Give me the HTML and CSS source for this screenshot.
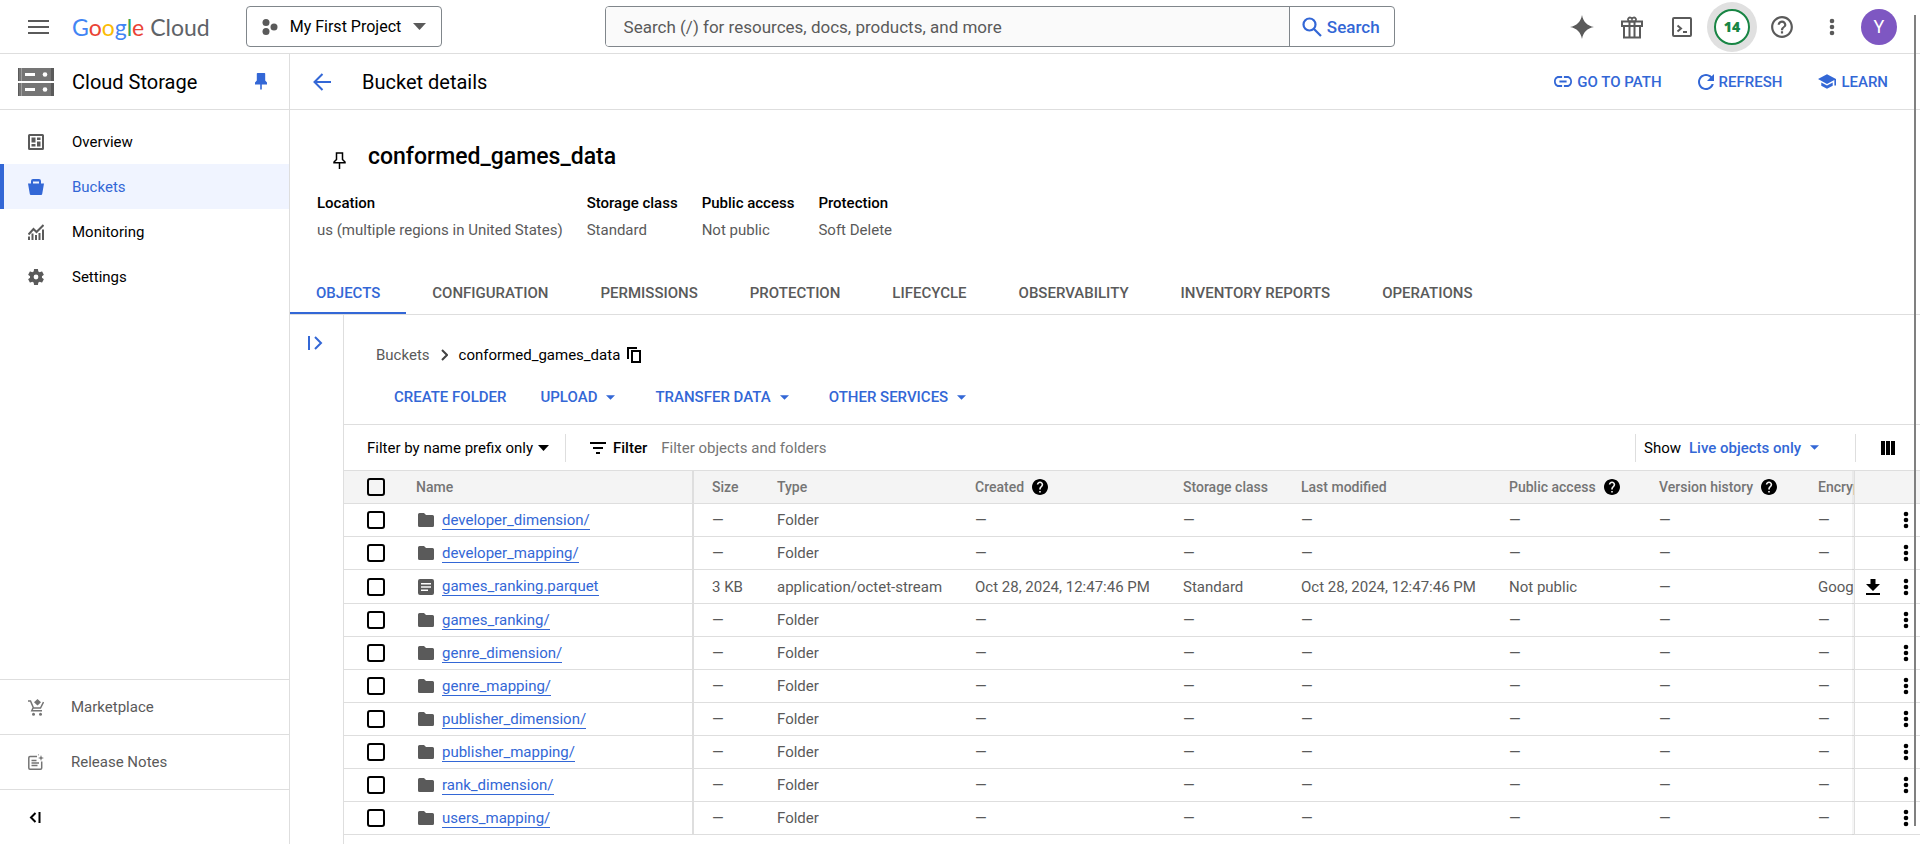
FILE: index.html
```html
<!DOCTYPE html>
<html lang="en">
<head>
<meta charset="utf-8">
<meta name="viewport" content="width=device-width, initial-scale=1">
<title>conformed_games_data – Bucket details – Cloud Storage</title>
<link rel="stylesheet" href="styles.css">
</head>
<body>
<svg class="sprite" aria-hidden="true">
  <symbol id="caret" viewBox="0 0 10 5"><path d="M0 0h10L5 5z"/></symbol>
  <symbol id="folder" viewBox="0 0 16 14"><path d="M1.500 0H6l2 2h6.500A1.500 1.500 0 0 1 16 3.500v9a1.500 1.500 0 0 1-1.500 1.500h-13A1.500 1.500 0 0 1 0 12.500v-11A1.500 1.500 0 0 1 1.500 0z"/></symbol>
  <symbol id="file" viewBox="0 0 16 16"><path fill-rule="evenodd" d="M2 0h12a2 2 0 0 1 2 2v12a2 2 0 0 1-2 2H2a2 2 0 0 1-2-2V2a2 2 0 0 1 2-2zm1 4v1.500h10V4zm0 3.200v1.500h10V7.200zm0 3.300V12h7v-1.500z"/></symbol>
  <symbol id="dots" viewBox="0 0 6 18"><circle cx="3" cy="3" r="2.300"/><circle cx="3" cy="9" r="2.300"/><circle cx="3" cy="15" r="2.300"/></symbol>
  <symbol id="help" viewBox="2 2 20 20"><path d="M12 2C6.480 2 2 6.480 2 12s4.480 10 10 10 10-4.480 10-10S17.520 2 12 2zm1 17h-2v-2h2v2zm2.070-7.750l-.9.920C13.450 12.900 13 13.500 13 15h-2v-.5c0-1.100.45-2.100 1.170-2.830l1.240-1.260c.37-.36.59-.86.59-1.410 0-1.100-.9-2-2-2s-2 .9-2 2H8c0-2.210 1.790-4 4-4s4 1.790 4 4c0 .88-.36 1.680-.93 2.250z"/></symbol>
</svg>

<div class="app">
  <header class="topbar">
    <button class="icon-btn menu-btn" aria-label="Main menu">
      <svg width="21" height="14" viewBox="0 0 21 14"><path d="M0 0h21v2H0zM0 6h21v2H0zM0 12h21v2H0z"/></svg>
    </button>
    <a class="logo" href="#" aria-label="Google Cloud"><span class="g-blue">G</span><span class="g-red">o</span><span class="g-yellow">o</span><span class="g-blue">g</span><span class="g-green">l</span><span class="g-red">e</span> <span class="logo-cloud">Cloud</span></a>
    <button class="project">
      <svg width="16" height="16" viewBox="0 0 16 16"><circle cx="4" cy="3.500" r="3.500"/><circle cx="4" cy="12.500" r="3.500"/><circle cx="12" cy="8" r="3.500"/></svg>
      <span>My First Project</span>
      <svg width="13" height="7" viewBox="0 0 10 5" preserveAspectRatio="none"><path d="M0 0h10L5 5z"/></svg>
    </button>
    <form class="search">
      <input class="search-input" type="search" aria-label="Search" placeholder="Search (/) for resources, docs, products, and more">
      <button class="search-btn" type="button">
        <svg width="20" height="20" viewBox="0 0 20 20" fill="none" stroke="currentColor" stroke-width="2.200"><circle cx="7.500" cy="7.500" r="6"/><path d="M12 12l7 7"/></svg>
        Search
      </button>
    </form>
    <nav class="tools" aria-label="Tools">
      <button class="icon-btn" aria-label="Gemini"><svg width="24" height="24" viewBox="0 0 24 24"><path d="M12 0c1.200 6.800 5.200 10.800 12 12-6.800 1.200-10.800 5.200-12 12-1.200-6.800-5.200-10.800-12-12C6.800 10.800 10.800 6.800 12 0z"/></svg></button>
      <button class="icon-btn" aria-label="Free trial"><svg width="24" height="24" viewBox="0 0 24 24" fill="none" stroke="currentColor" stroke-width="2"><path d="M2 6.500h20v4.500H2zM4 11v11.500h16V11M9.500 6.500v16M14.500 6.500v16"/><path d="M12 6.500H9.200a2.100 2.100 0 1 1 2.800-2.700 2.100 2.100 0 1 1 2.800 2.700z" stroke-width="1.800"/></svg></button>
      <button class="icon-btn" aria-label="Cloud Shell"><svg width="20" height="20" viewBox="0 0 20 20" fill="none" stroke="currentColor" stroke-width="2"><rect x="1" y="1" width="18" height="18" rx="1"/><path d="M5.500 8.500l3.500 3-3.500 3M11 15h4"/></svg></button>
      <button class="icon-btn badge-btn" aria-label="14 notifications"><span class="badge">14</span></button>
      <button class="icon-btn" aria-label="Help"><svg width="24" height="24" viewBox="1 1 22 22"><path d="M11 18h2v-2h-2v2zm1-16C6.480 2 2 6.480 2 12s4.480 10 10 10 10-4.480 10-10S17.520 2 12 2zm0 18c-4.410 0-8-3.590-8-8s3.590-8 8-8 8 3.590 8 8-3.590 8-8 8zm0-14c-2.210 0-4 1.790-4 4h2c0-1.100.9-2 2-2s2 .9 2 2c0 2-3 1.750-3 5h2c0-2.250 3-2.500 3-5 0-2.210-1.790-4-4-4z"/></svg></button>
      <button class="icon-btn" aria-label="More"><svg width="6" height="18"><use href="#dots"/></svg></button>
      <button class="avatar" aria-label="Account">Y</button>
    </nav>
  </header>

  <div class="body">
    <aside class="sidebar">
      <div class="product">
        <svg class="product-icon" width="36" height="28" viewBox="0 0 36 28"><path fill="#757575" d="M0 0h36v13H0zM0 15h36v13H0z"/><path fill="#9e9e9e" d="M3 0h1v13H3zM3 15h1v13H3z"/><path fill="#5a5a5a" d="M33 0h3v13h-3zM33 15h3v13h-3zM0 0h1v13H0zM0 15h1v13H0z"/><path fill="#fff" d="M7 5h10v3H7zM7 20h10v3H7z"/><circle cx="27" cy="6.500" r="2.300" fill="#fff"/><circle cx="27" cy="21.500" r="2.300" fill="#fff"/></svg>
        <span class="product-name">Cloud Storage</span>
        <button class="icon-btn pin-btn" aria-label="Unpin"><svg width="12" height="17" viewBox="0 0 12 17"><path d="M2.500 0h7a.7.7 0 0 1 .7.700V7.500l1.800 2V11.500H6.800V16L6 17l-.8-1V11.500H0v-2l1.800-2V.7A.7.7 0 0 1 2.500 0z"/></svg></button>
      </div>
      <nav class="side-nav" aria-label="Cloud Storage">
        <a class="side-item" href="#"><svg width="16" height="16" viewBox="0 0 16 16"><path fill-rule="evenodd" d="M1.500 0h13A1.500 1.500 0 0 1 16 1.500v13a1.500 1.500 0 0 1-1.500 1.500h-13A1.500 1.500 0 0 1 0 14.500v-13A1.500 1.500 0 0 1 1.500 0zM2 2v12h12V2z"/><path d="M3.500 3.500h4v5h-4zM9 3.500h3.500v2.500H9zM9 7.500h3.500v5H9zM3.500 10h4v2.500h-4z"/></svg>Overview</a>
        <a class="side-item active" href="#" aria-current="page"><svg width="16" height="16" viewBox="0 0 16 16"><path fill-rule="evenodd" d="M5 0h6a2 2 0 0 1 2 2v2.500h3L14.200 15a1.200 1.200 0 0 1-1.200 1H3a1.200 1.200 0 0 1-1.200-1L0 4.500h3V2a2 2 0 0 1 2-2zm0 2.500v2h6v-2z"/></svg>Buckets</a>
        <a class="side-item" href="#"><svg width="16" height="16" viewBox="0 0 16 16"><path d="M0 12.500h2V16H0zM3.500 9.500h2V16h-2zM7 11h2v5H7zM10.500 9h2v7h-2zM14 5.500h2V16h-2z"/><path d="M.5 10.500L5.500 5l3 3L15.500 1" fill="none" stroke="currentColor" stroke-width="2"/></svg>Monitoring</a>
        <a class="side-item" href="#"><svg width="16" height="16" viewBox="2.200 2 19.600 20"><path d="M19.430 12.980c.04-.32.07-.64.07-.98s-.03-.66-.07-.98l2.110-1.650c.19-.15.24-.42.12-.64l-2-3.460c-.12-.22-.39-.3-.61-.22l-2.490 1c-.52-.4-1.080-.73-1.690-.98l-.38-2.650C14.460 2.180 14.250 2 14 2h-4c-.25 0-.46.18-.49.42l-.38 2.650c-.61.25-1.170.59-1.690.98l-2.490-1c-.23-.09-.49 0-.61.22l-2 3.460c-.13.22-.07.49.12.64l2.110 1.650c-.04.32-.07.65-.07.98s.03.66.07.98l-2.110 1.650c-.19.15-.24.42-.12.64l2 3.460c.12.22.39.3.61.22l2.490-1c.52.4 1.080.73 1.690.98l.38 2.650c.03.24.24.42.49.42h4c.25 0 .46-.18.49-.42l.38-2.650c.61-.25 1.170-.59 1.690-.98l2.490 1c.23.09.49 0 .61-.22l2-3.460c.12-.22.07-.49-.12-.64l-2.110-1.650zM12 15a3 3 0 1 1 0-6 3 3 0 0 1 0 6z"/></svg>Settings</a>
      </nav>
      <div class="side-foot">
        <a class="foot-item" href="#"><svg width="16" height="17" viewBox="0 0 16 17"><path d="M9.500 0l3.500 3.300-3.500 3.300L6 3.300z"/><path d="M0 2h2.500L5.500 9h7L15.500 3M5 9l-1.200 2.800H14" fill="none" stroke="currentColor" stroke-width="1.500"/><circle cx="5.500" cy="15.200" r="1.500"/><circle cx="12.500" cy="15.200" r="1.500"/></svg>Marketplace</a>
        <a class="foot-item" href="#"><svg width="16" height="16" viewBox="0 0 16 16"><path d="M9 2.500H2A1.200 1.200 0 0 0 .8 3.700v10.300A1.200 1.200 0 0 0 2 15.200h10.500a1.200 1.200 0 0 0 1.200-1.200V7.500M3.500 6.500h5M3.500 9h7.500M3.500 11.500h6" fill="none" stroke="currentColor" stroke-width="1.500"/><path d="M13 1l.8 2.200L16 4l-2.200.8L13 7l-.8-2.200L10 4l2.200-.8zM10.500 0l.4 1 .1.500-1.200-.5z"/></svg>Release Notes</a>
        <button class="collapse" aria-label="Hide navigation"><svg width="12" height="11" viewBox="0 0 12 11" fill="none" stroke="currentColor" stroke-width="2"><path d="M6.500 1L2 5.500 6.500 10M10.500 0v11"/></svg></button>
      </div>
    </aside>

    <main class="main">
      <div class="page-bar">
        <button class="icon-btn back" aria-label="Back"><svg width="18" height="18" viewBox="0 0 18 18" fill="none" stroke="currentColor" stroke-width="2"><path d="M18 9H2M9.500 1L1.500 9l8 8"/></svg></button>
        <h1 class="page-title">Bucket details</h1>
        <div class="page-actions">
          <button class="text-btn"><svg width="18" height="11" viewBox="2 7 20 10" preserveAspectRatio="none"><path d="M3.900 12c0-1.710 1.390-3.100 3.100-3.100h4V7H7c-2.760 0-5 2.240-5 5s2.240 5 5 5h4v-1.900H7c-1.710 0-3.100-1.390-3.100-3.100zM8 13h8v-2H8v2zm9-6h-4v1.900h4c1.710 0 3.100 1.390 3.100 3.100s-1.390 3.100-3.100 3.100h-4V17h4c2.760 0 5-2.240 5-5s-2.240-5-5-5z"/></svg>GO TO PATH</button>
          <button class="text-btn"><svg width="16" height="16" viewBox="4 4 16 16"><path d="M17.650 6.350C16.200 4.900 14.210 4 12 4c-4.420 0-7.990 3.580-7.990 8s3.570 8 7.990 8c3.730 0 6.840-2.550 7.730-6h-2.080c-.82 2.330-3.040 4-5.650 4-3.310 0-6-2.690-6-6s2.690-6 6-6c1.660 0 3.140.69 4.220 1.780L13 11h7V4l-2.350 2.350z"/></svg>REFRESH</button>
          <button class="text-btn"><svg width="18" height="15" viewBox="1 3 22 18"><path d="M5 13.180v4L12 21l7-3.820v-4L12 17l-7-3.820zM12 3L1 9l11 6 9-4.910V17h2V9L12 3z"/></svg>LEARN</button>
        </div>
      </div>

      <section class="summary">
        <div class="bucket-head">
          <button class="icon-btn pin-bucket" aria-label="Pin bucket"><svg width="13" height="17" viewBox="0 0 13 17" fill="none" stroke="currentColor" stroke-width="1.500"><path d="M3.500 1h6v6.500L12 10v.8H1V10l2.500-2.500zM6.500 11v6"/></svg></button>
          <h2 class="bucket-name">conformed_games_data</h2>
        </div>
        <dl class="facts">
          <div><dt>Location</dt><dd>us (multiple regions in United States)</dd></div>
          <div><dt>Storage class</dt><dd>Standard</dd></div>
          <div><dt>Public access</dt><dd>Not public</dd></div>
          <div><dt>Protection</dt><dd>Soft Delete</dd></div>
        </dl>
      </section>

      <nav class="tabs" aria-label="Bucket sections">
        <a class="tab active" href="#">OBJECTS</a>
        <a class="tab" href="#">CONFIGURATION</a>
        <a class="tab" href="#">PERMISSIONS</a>
        <a class="tab" href="#">PROTECTION</a>
        <a class="tab" href="#">LIFECYCLE</a>
        <a class="tab" href="#">OBSERVABILITY</a>
        <a class="tab" href="#">INVENTORY REPORTS</a>
        <a class="tab" href="#">OPERATIONS</a>
      </nav>

      <div class="browser">
        <div class="rail">
          <button class="icon-btn blue" aria-label="Show folder browser"><svg width="15" height="14" viewBox="0 0 15 14" fill="none" stroke="currentColor" stroke-width="2"><path d="M1 0v14M7 1l6 6-6 6"/></svg></button>
        </div>
        <div class="objects">
          <div class="crumbs">
            <a class="crumb" href="#">Buckets</a>
            <svg width="7" height="12" viewBox="0 0 7 12" fill="none" stroke="#424242" stroke-width="2"><path d="M1 1l5 5-5 5"/></svg>
            <span>conformed_games_data</span>
            <button class="icon-btn copy" aria-label="Copy"><svg width="14" height="16" viewBox="0 0 14 16" fill="none" stroke="currentColor" stroke-width="2"><path d="M1 12V1h9"/><rect x="5" y="4" width="8" height="11"/></svg></button>
          </div>
          <div class="actions">
            <button class="text-btn">CREATE FOLDER</button>
            <button class="text-btn menu">UPLOAD<svg width="9" height="5"><use href="#caret"/></svg></button>
            <button class="text-btn menu">TRANSFER DATA<svg width="9" height="5"><use href="#caret"/></svg></button>
            <button class="text-btn menu">OTHER SERVICES<svg width="9" height="5"><use href="#caret"/></svg></button>
          </div>
          <div class="filter-bar">
            <label class="pick prefix">
              <select aria-label="Filter type"><option>Filter by name prefix only</option></select>
              <svg width="11" height="6" viewBox="0 0 10 5" preserveAspectRatio="none"><path d="M0 0h10L5 5z"/></svg>
            </label>
            <label class="filter-label" for="filter"><svg width="16" height="12" viewBox="0 0 16 12"><path d="M0 0h16v2H0zM3 5h10v2H3zM6 10h4v2H6z"/></svg>Filter</label>
            <input class="filter-input" id="filter" type="text" placeholder="Filter objects and folders">
            <div class="show">
              <label for="show">Show</label>
              <span class="pick live"><select id="show"><option>Live objects only</option></select><svg width="9" height="5"><use href="#caret"/></svg></span>
            </div>
            <button class="icon-btn columns" aria-label="Column display options"><svg width="14" height="14" viewBox="0 0 14 14"><path d="M0 0h4v14H0zM5 0h4v14H5zM10 0h4v14h-4z"/></svg></button>
          </div>

          <div class="table-wrap">
            <table class="table">
              <colgroup><col class="c-check"><col class="c-name"><col class="c-size"><col class="c-type"><col class="c-created"><col class="c-class"><col class="c-mod"><col class="c-public"><col class="c-version"><col class="c-enc"><col class="c-act"></colgroup>
              <thead>
                <tr><th><input class="check" type="checkbox" aria-label="Select all"></th><th class="name">Name</th><th>Size</th><th>Type</th><th><span class="th-help">Created<svg width="16" height="16"><use href="#help"/></svg></span></th><th>Storage class</th><th>Last modified</th><th><span class="th-help">Public access<svg width="16" height="16"><use href="#help"/></svg></span></th><th><span class="th-help">Version history<svg width="16" height="16"><use href="#help"/></svg></span></th><th>Encryption</th><th class="act"></th></tr>
              </thead>
              <tbody>
                <tr><td><input class="check" type="checkbox" aria-label="Select developer_dimension/"></td><td class="name"><span class="obj"><svg width="16" height="14"><use href="#folder"/></svg><a href="#">developer_dimension/</a></span></td><td>—</td><td>Folder</td><td>—</td><td>—</td><td>—</td><td>—</td><td>—</td><td>—</td><td class="act"><div class="row-act"><button class="icon-btn" aria-label="More actions"><svg width="6" height="18"><use href="#dots"/></svg></button></div></td></tr>
                <tr><td><input class="check" type="checkbox" aria-label="Select developer_mapping/"></td><td class="name"><span class="obj"><svg width="16" height="14"><use href="#folder"/></svg><a href="#">developer_mapping/</a></span></td><td>—</td><td>Folder</td><td>—</td><td>—</td><td>—</td><td>—</td><td>—</td><td>—</td><td class="act"><div class="row-act"><button class="icon-btn" aria-label="More actions"><svg width="6" height="18"><use href="#dots"/></svg></button></div></td></tr>
                <tr class="file-row"><td><input class="check" type="checkbox" aria-label="Select games_ranking.parquet"></td><td class="name"><span class="obj"><svg width="16" height="16"><use href="#file"/></svg><a href="#">games_ranking.parquet</a></span></td><td>3 KB</td><td>application/octet-stream</td><td>Oct 28, 2024, 12:47:46 PM</td><td>Standard</td><td>Oct 28, 2024, 12:47:46 PM</td><td>Not public</td><td>—</td><td>Google-managed</td><td class="act"><div class="row-act"><button class="icon-btn" aria-label="Download"><svg width="14" height="16" viewBox="0 0 14 16"><path d="M4.500 0h5v5H14l-7 7-7-7h4.500zM0 14h14v2H0z"/></svg></button><button class="icon-btn" aria-label="More actions"><svg width="6" height="18"><use href="#dots"/></svg></button></div></td></tr>
                <tr><td><input class="check" type="checkbox" aria-label="Select games_ranking/"></td><td class="name"><span class="obj"><svg width="16" height="14"><use href="#folder"/></svg><a href="#">games_ranking/</a></span></td><td>—</td><td>Folder</td><td>—</td><td>—</td><td>—</td><td>—</td><td>—</td><td>—</td><td class="act"><div class="row-act"><button class="icon-btn" aria-label="More actions"><svg width="6" height="18"><use href="#dots"/></svg></button></div></td></tr>
                <tr><td><input class="check" type="checkbox" aria-label="Select genre_dimension/"></td><td class="name"><span class="obj"><svg width="16" height="14"><use href="#folder"/></svg><a href="#">genre_dimension/</a></span></td><td>—</td><td>Folder</td><td>—</td><td>—</td><td>—</td><td>—</td><td>—</td><td>—</td><td class="act"><div class="row-act"><button class="icon-btn" aria-label="More actions"><svg width="6" height="18"><use href="#dots"/></svg></button></div></td></tr>
                <tr><td><input class="check" type="checkbox" aria-label="Select genre_mapping/"></td><td class="name"><span class="obj"><svg width="16" height="14"><use href="#folder"/></svg><a href="#">genre_mapping/</a></span></td><td>—</td><td>Folder</td><td>—</td><td>—</td><td>—</td><td>—</td><td>—</td><td>—</td><td class="act"><div class="row-act"><button class="icon-btn" aria-label="More actions"><svg width="6" height="18"><use href="#dots"/></svg></button></div></td></tr>
                <tr><td><input class="check" type="checkbox" aria-label="Select publisher_dimension/"></td><td class="name"><span class="obj"><svg width="16" height="14"><use href="#folder"/></svg><a href="#">publisher_dimension/</a></span></td><td>—</td><td>Folder</td><td>—</td><td>—</td><td>—</td><td>—</td><td>—</td><td>—</td><td class="act"><div class="row-act"><button class="icon-btn" aria-label="More actions"><svg width="6" height="18"><use href="#dots"/></svg></button></div></td></tr>
                <tr><td><input class="check" type="checkbox" aria-label="Select publisher_mapping/"></td><td class="name"><span class="obj"><svg width="16" height="14"><use href="#folder"/></svg><a href="#">publisher_mapping/</a></span></td><td>—</td><td>Folder</td><td>—</td><td>—</td><td>—</td><td>—</td><td>—</td><td>—</td><td class="act"><div class="row-act"><button class="icon-btn" aria-label="More actions"><svg width="6" height="18"><use href="#dots"/></svg></button></div></td></tr>
                <tr><td><input class="check" type="checkbox" aria-label="Select rank_dimension/"></td><td class="name"><span class="obj"><svg width="16" height="14"><use href="#folder"/></svg><a href="#">rank_dimension/</a></span></td><td>—</td><td>Folder</td><td>—</td><td>—</td><td>—</td><td>—</td><td>—</td><td>—</td><td class="act"><div class="row-act"><button class="icon-btn" aria-label="More actions"><svg width="6" height="18"><use href="#dots"/></svg></button></div></td></tr>
                <tr><td><input class="check" type="checkbox" aria-label="Select users_mapping/"></td><td class="name"><span class="obj"><svg width="16" height="14"><use href="#folder"/></svg><a href="#">users_mapping/</a></span></td><td>—</td><td>Folder</td><td>—</td><td>—</td><td>—</td><td>—</td><td>—</td><td>—</td><td class="act"><div class="row-act"><button class="icon-btn" aria-label="More actions"><svg width="6" height="18"><use href="#dots"/></svg></button></div></td></tr>
              </tbody>
            </table>
          </div>
        </div>
      </div>
    </main>
  </div>
</div>
<div class="scroll-thumb" aria-hidden="true"></div>
</body>
</html>
```
FILE: styles.css
```css
:root {
  --blue: #3367d6;
  --line: #dedede;
  --grey: #5a5a5a;
  --muted: #757575;
}

* { box-sizing: border-box; }

body {
  margin: 0;
  background: #fff;
  color: #000;
  font: 15px/20px Roboto, "Noto Sans", sans-serif;
}

button, input, select { font: inherit; color: inherit; }
button { border: 0; padding: 0; background: none; cursor: pointer; }
a { color: inherit; text-decoration: none; }
h1, h2, dl, dd { margin: 0; font-weight: 400; }
svg { display: block; flex: none; fill: currentColor; }
svg[fill="none"] { fill: none; }
.sprite { display: none; }

.app { display: flex; flex-direction: column; height: 100vh; overflow: hidden; }

.icon-btn { display: flex; align-items: center; justify-content: center; }
.blue { color: var(--blue); }

/* Top bar */
.topbar {
  display: flex;
  align-items: center;
  flex: none;
  height: 54px;
  padding: 0 20px 0 28px;
  border-bottom: 1px solid var(--line);
}
.menu-btn { color: var(--grey); }
.logo {
  margin: 0 36px 0 23px;
  font: 23px/32px Lato, sans-serif;
  white-space: nowrap;
}
.g-blue { color: #4285f4; }
.g-red { color: #ea4335; }
.g-yellow { color: #fbbc04; }
.g-green { color: #34a853; }
.logo-cloud { color: #5f6368; }
.project {
  display: flex;
  align-items: center;
  gap: 12px;
  height: 41px;
  padding: 0 15px;
  border: 1px solid #80868b;
  border-radius: 4px;
  font-size: 16px;
  white-space: nowrap;
}
.project svg { color: var(--grey); }
.search {
  display: flex;
  flex: 0 1 790px;
  height: 41px;
  margin: 0 auto;
  border: 1px solid #80868b;
  border-radius: 4px;
  overflow: hidden;
}
.search-input {
  flex: 1;
  min-width: 0;
  padding: 0 18px;
  border: 0;
  background: #fafafa;
  font-size: 17px;
}
.search-input::placeholder { color: var(--grey); opacity: 1; }
.search-btn {
  display: flex;
  align-items: center;
  gap: 5px;
  padding: 0 14px 0 12px;
  border-left: 1px solid #80868b;
  color: var(--blue);
  font-size: 17px;
  font-weight: 500;
}
.tools { display: flex; align-items: center; color: var(--grey); }
.tools .icon-btn { width: 50px; height: 50px; }
.tools .badge-btn { border-radius: 50%; background: #e0e0e0; }
.badge {
  width: 36px;
  height: 36px;
  border: 2px solid #188544;
  border-radius: 50%;
  background: #fff;
  color: #188544;
  font: 800 14px/32px "Open Sans", sans-serif;
}
.avatar {
  width: 36px;
  height: 36px;
  margin: 0 3px 0 4px;
  border-radius: 50%;
  background: #7e57c2;
  color: #fff;
  font-size: 18px;
}

.body { display: flex; flex: 1; min-height: 0; }

/* Side navigation */
.sidebar {
  display: flex;
  flex-direction: column;
  flex: none;
  width: 290px;
  border-right: 1px solid var(--line);
}
.product {
  display: flex;
  align-items: center;
  height: 56px;
  padding: 0 22px 0 18px;
  border-bottom: 1px solid var(--line);
}
.product-name { flex: 1; margin-left: 18px; font-size: 20px; }
.pin-btn { color: var(--blue); }
.side-nav { flex: 1; padding-top: 9px; }
.side-item {
  display: flex;
  align-items: center;
  gap: 28px;
  height: 45px;
  padding-left: 24px;
  border-left: 4px solid transparent;
}
.side-item svg { color: var(--grey); }
.side-item.active { border-color: var(--blue); background: #f0f4ff; color: var(--blue); }
.side-item.active svg { color: inherit; }
.foot-item {
  display: flex;
  align-items: center;
  gap: 27px;
  height: 55px;
  padding-left: 28px;
  border-top: 1px solid var(--line);
  color: var(--grey);
}
.foot-item svg { color: var(--muted); }
.collapse {
  display: flex;
  align-items: center;
  width: 100%;
  height: 55px;
  padding-left: 29px;
  border-top: 1px solid var(--line);
}

/* Page heading */
.main { display: flex; flex-direction: column; flex: 1; min-width: 0; }
.page-bar {
  display: flex;
  align-items: center;
  flex: none;
  height: 56px;
  padding: 0 32px 0 23px;
  border-bottom: 1px solid var(--line);
}
.back { color: var(--blue); }
.page-title { margin-left: 31px; font-size: 20px; }
.page-actions { display: flex; gap: 36px; margin-left: auto; }
.text-btn {
  display: flex;
  align-items: center;
  gap: 5px;
  color: var(--blue);
  font-weight: 500;
  white-space: nowrap;
}
.summary { padding: 31px 27px 0; }
.bucket-head { display: flex; align-items: center; gap: 22px; padding-left: 16px; }
.pin-bucket { padding-top: 6px; }
.bucket-name { font-size: 23px; font-weight: 500; line-height: 32px; }
.facts { display: flex; gap: 24px; padding-top: 20px; }
.facts dt { font-weight: 500; }
.facts dd { margin-top: 7px; color: var(--grey); }

.tabs { display: flex; flex: none; margin-top: 32px; border-bottom: 1px solid var(--line); }
.tab {
  height: 42px;
  padding: 11px 26px 0;
  color: var(--grey);
  font-weight: 500;
  white-space: nowrap;
}
.tab.active { border-bottom: 2px solid var(--blue); color: var(--blue); }

/* Object browser */
.browser { display: flex; flex: 1; min-height: 0; }
.rail { flex: none; width: 54px; padding: 21px 0 0 18px; border-right: 1px solid var(--line); }
.objects { flex: 1; min-width: 0; }
.crumbs { display: flex; align-items: center; gap: 11px; padding: 30px 32px 0; }
.crumb { color: var(--grey); }
.copy { margin-left: -4px; }
.actions { display: flex; gap: 34px; padding: 22px 50px 17px; }
.actions .menu { gap: 9px; padding-right: 6px; }
.filter-bar {
  display: flex;
  align-items: center;
  height: 46px;
  padding-left: 23px;
  border-top: 1px solid var(--line);
}
.pick { display: flex; align-items: center; gap: 4px; }
.pick select {
  appearance: none;
  padding: 0;
  border: 0;
  background: none;
}
.prefix { height: 28px; padding-right: 16px; border-right: 1px solid var(--line); }
.filter-label {
  display: flex;
  align-items: center;
  gap: 7px;
  margin-left: 24px;
  font-weight: 500;
}
.filter-input { flex: 1; min-width: 0; margin-left: 14px; padding: 0; border: 0; }
.filter-input::placeholder { color: var(--muted); opacity: 1; }
.show {
  display: flex;
  align-items: center;
  gap: 8px;
  height: 28px;
  padding: 0 36px 0 8px;
  border: solid var(--line);
  border-width: 0 1px;
}
.live { gap: 8px; color: var(--blue); font-weight: 500; }
.columns { width: 64px; }

.table-wrap { overflow-x: auto; scrollbar-width: none; border-top: 1px solid var(--line); }
.table {
  width: 1723px;
  min-width: 100%;
  table-layout: fixed;
  border-spacing: 0;
  color: var(--grey);
}
.c-check { width: 55px; }
.c-name { width: 295px; }
.c-size { width: 65px; }
.c-type { width: 198px; }
.c-created { width: 208px; }
.c-class { width: 118px; }
.c-mod { width: 208px; }
.c-public { width: 150px; }
.c-version { width: 159px; }
.c-enc { width: 201px; }
.c-act { width: 66px; }
.table th, .table td {
  height: 33px;
  padding: 0 0 0 18px;
  border-bottom: 1px solid var(--line);
  text-align: left;
  white-space: nowrap;
}
.table .file-row td { height: 34px; }
.table th {
  background: #f4f4f4;
  color: var(--muted);
  font-size: 14px;
  font-weight: 500;
}
.table th:first-child, .table td:first-child { padding-left: 23px; }
.table .name { padding-left: 17px; border-right: 2px solid var(--line); }
.table .act {
  position: sticky;
  right: 0;
  padding: 0 11px;
  border-left: 1px solid var(--line);
  background: #fff;
  box-shadow: -2px 0 0 rgba(0, 0, 0, 0.04);
}
.table th.act { background: #f4f4f4; }
.th-help { display: flex; align-items: center; gap: 8px; }
.th-help svg { color: #000; }
.row-act { display: flex; justify-content: flex-end; gap: 23px; color: #000; }
.obj { display: flex; align-items: center; gap: 8px; padding-left: 2px; }
.obj a { border-bottom: 1px solid var(--blue); color: var(--blue); line-height: 18px; }
.check {
  display: block;
  appearance: none;
  width: 18px;
  height: 18px;
  margin: 0;
  border: 2px solid #000;
  border-radius: 3px;
}

/* Overlay scrollbar of the page */
.scroll-thumb {
  position: fixed;
  top: 15px;
  right: 4px;
  bottom: 18px;
  width: 2px;
  background: #808080;
}
```
